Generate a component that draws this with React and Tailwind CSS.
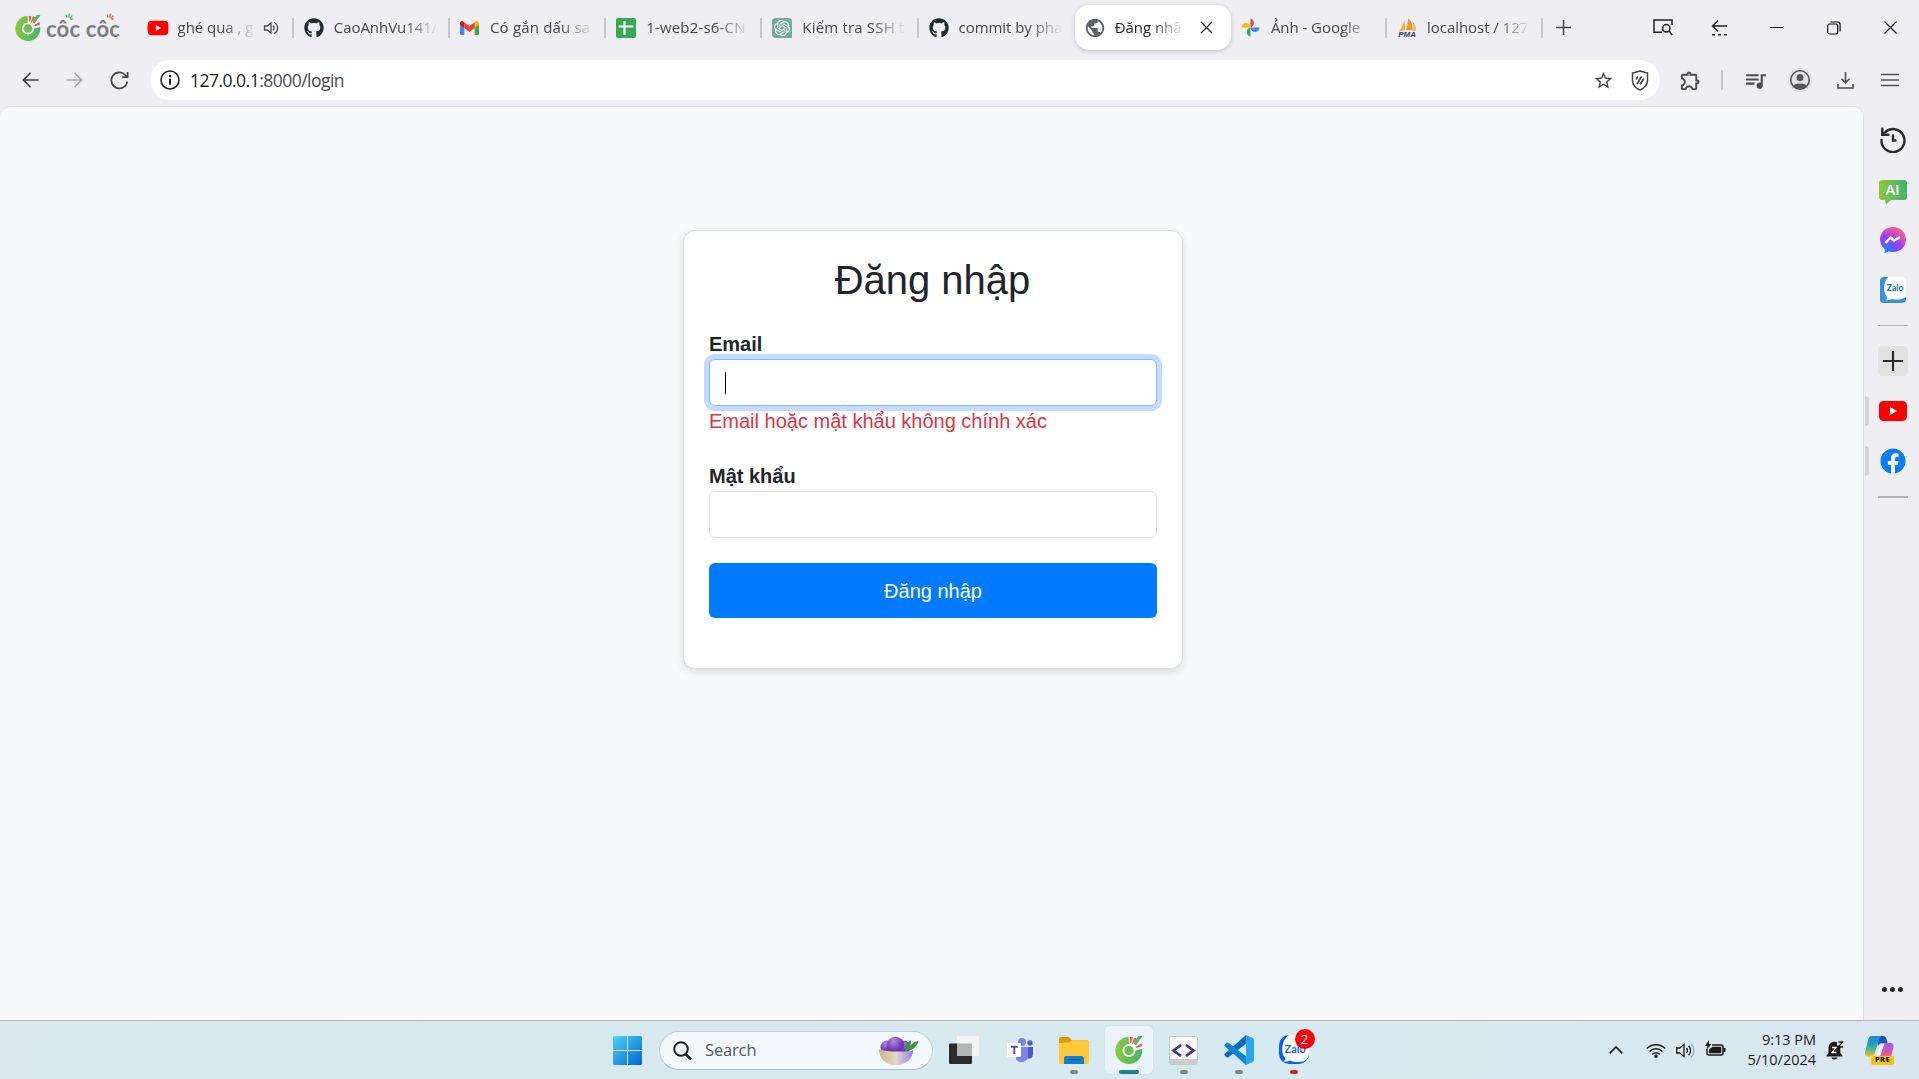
import React from "react";
import { FaYoutube, FaGithub, FaFacebook } from "react-icons/fa";
import { SiOpenai } from "react-icons/si";
import { MdPublic, MdStarBorder, MdOutlineExtension, MdQueueMusic } from "react-icons/md";

const Ray = ({ color = "#f15a38" }) => (
  <svg width="8" height="7" viewBox="0 0 8 7" stroke={color} strokeWidth="1.3" fill="none">
    <path d="M1.2 1.5l.9 3M4.6.6L3.6 4.6M7.3 2.6L4.8 5.6M7.6 5.6L5.5 6.6" />
  </svg>
);

const CocCocMark = ({ size, id }) => (
  <svg width={size} height={size} viewBox="0 0 26 26" className="shrink-0">
    <defs>
      <linearGradient id={id} x1="0" x2="1">
        <stop offset="0" stopColor="#8cc83f" />
        <stop offset="1" stopColor="#43b66a" />
      </linearGradient>
    </defs>
    <path d="M12.500 1a12.500 12.500 0 1 0 12.800 12l-.3-1-6 1.800a6 6 0 1 1-6-6.300z" fill={`url(#${id})`} />
    <circle cx="13" cy="13.500" r="5.800" fill="#f3f8f1" />
    <circle cx="13" cy="13.500" r="4.200" fill="#6bbf52" />
    <path d="M17.500 7L21.500 0H25.500L19.500 8.500z" fill="#4fb95f" />
    <path d="M13.800.8l2.500.4-1.200 5.600-1-.2zM17.800 1.300l2.300 1.200-3.600 5.200-.6-.6zM24.500 7l.6 2.500-5.200 1.700-.5-1.300z" fill="#f15a38" />
  </svg>
);

const Gmail = () => (
  <svg width="19" height="14" viewBox="0 0 19 14">
    <path d="M0 2v10.600c0 .8.600 1.400 1.400 1.400h2.900V6z" fill="#4285f4" />
    <path d="M14.700 14h2.900c.8 0 1.400-.6 1.400-1.400V2l-4.300 4z" fill="#34a853" />
    <path d="M14.700 1.200V7L19 3.800V2c0-1.700-1.900-2.600-3.300-1.600z" fill="#fbbc04" />
    <path d="M4.300 7V1.200l5.200 3.900 5.200-3.900V7l-5.200 3.900z" fill="#ea4335" />
    <path d="M0 2v1.800L4.300 7V1.200L3.300.4C1.900-.6 0 .3 0 2z" fill="#c5221f" />
  </svg>
);

const Sheets = () => (
  <svg width="20" height="20" viewBox="0 0 20 20">
    <rect width="20" height="20" rx="2" fill="#34a853" />
    <path d="M2.500 8.500h15M8.500 3v14" stroke="#fff" strokeWidth="2.200" />
  </svg>
);

const Gpt = () => (
  <div className="flex h-5 w-5 items-center justify-center rounded-[4px] rounded-br-none bg-[#74aa9c]">
    <SiOpenai size={16} color="#fff" />
  </div>
);

const Photos = () => (
  <svg width="19" height="19" viewBox="0 0 19 19">
    <path d="M9.500.5a4.700 4.700 0 0 1 0 9z" fill="#ea4335" />
    <path d="M18.500 9.500a4.500 4.500 0 0 1-9 0z" fill="#4285f4" />
    <path d="M9.500 18.500a4.600 4.600 0 0 1 0-9z" fill="#34a853" />
    <path d="M.5 9.500a4.500 4.500 0 0 1 9 0z" fill="#fbbc04" />
  </svg>
);

const Pma = () => (
  <div className="flex w-5 flex-col items-center">
    <svg width="20" height="14" viewBox="0 0 20 14">
      <path d="M7.500 1L8 12l-6 1.500C5 10 6.500 6 7.500 1z" fill="#f7a83d" />
      <path d="M11 0c4 4 5 8 4.500 12.500L9 12c1.500-4 2-8 2-12z" fill="#f79427" />
      <path d="M15.500 3c2.500 3 3.500 6 3.500 9.500l-3 .5c.6-3 .5-6.500-.5-10z" fill="#f9b04b" />
    </svg>
    <span className="font-['Liberation_Sans'] text-[8px] leading-[6px] font-bold italic text-[#3a3a78]">PMA</span>
  </div>
);

const tabs = [
  { icon: <FaYoutube size={22} color="#f00" />, title: "ghé qua , g", audio: true, sep: true },
  { icon: <FaGithub size={20} color="#24292f" />, title: "CaoAnhVu141/", sep: true },
  { icon: <Gmail />, title: "Có gắn dấu sa", sep: true, wide: true },
  { icon: <Sheets />, title: "1-web2-s6-CN", sep: true, wide: true },
  { icon: <Gpt />, title: "Kiểm tra SSH t", sep: true, wide: true },
  { icon: <FaGithub size={20} color="#24292f" />, title: "commit by pha" },
  { icon: <MdPublic size={22} color="#5f6368" />, title: "Đăng nhậ", active: true },
  { icon: <Photos />, title: "Ảnh - Google", sep: true },
  { icon: <Pma />, title: "localhost / 127", sep: true },
];

const Speaker = () => (
  <svg width="16" height="16" viewBox="0 0 16 16" fill="none" stroke="#4a4a4f" strokeWidth="1.300">
    <path d="M1.500 6v4h2.700L8 13V3L4.200 6z" />
    <path d="M10 5.500a3.500 3.500 0 0 1 0 5M11 2.500a6 6 0 0 1 0 11" />
  </svg>
);

function Tab({ icon, title, audio, active, sep, wide }) {
  const shell = active
    ? "bg-white rounded-[14px] shadow-[0_1px_4px_rgba(0,0,0,0.22)] text-[#1f1f1f]"
    : "text-[#46464b]";
  const textWidth = audio ? "w-[79px]" : active ? "w-[70px]" : "w-[104px]";
  const tracking = wide ? "tracking-[0.180px]" : "tracking-[-0.050px]";
  return (
    <div className={`flex h-[45px] w-[156.200px] shrink-0 items-center ${shell}`}>
      <div className="flex w-10 shrink-0 items-center justify-center">{icon}</div>
      <div
        className={`${textWidth} ${tracking} -mt-px shrink-0 overflow-hidden text-[15px] leading-6 whitespace-nowrap [mask-image:linear-gradient(to_right,#000_calc(100%-34px),transparent)]`}
      >
        {title}
      </div>
      {audio && <div className="ml-[6px]"><Speaker /></div>}
      {active && (
        <svg width="13" height="13" viewBox="0 0 13 13" className="ml-[15px]" stroke="#222" strokeWidth="1.300">
          <path d="M1 1l11 11M12 1L1 12" />
        </svg>
      )}
      {sep && <div className="ml-auto h-5 w-[2px] rounded bg-[#c6c6c9]" />}
    </div>
  );
}

const Slot = ({ className = "", children }) => (
  <div className={`flex shrink-0 items-center justify-center ${className}`}>{children}</div>
);

function TabStrip() {
  return (
    <div className="flex h-[55px] items-center">
      <div className="flex w-[137.600px] shrink-0 items-center pl-[15px]">
        <CocCocMark size={26} id="mark-top" />
        <div className="relative ml-[5px] pt-[3px] font-['Lato'] text-[22px] leading-[26px] font-bold tracking-[0.200px] whitespace-nowrap text-[#7d7d80]">
          côc côc
          <div className="absolute top-0 left-[19px]"><Ray color="#43b66a" /></div>
          <div className="absolute top-0 left-[60px]"><Ray /></div>
        </div>
      </div>
      {tabs.map((t) => <Tab key={t.title} {...t} />)}
      <Slot className="w-10">
        <svg width="15" height="15" viewBox="0 0 15 15" stroke="#444" strokeWidth="1.500"><path d="M7.500 0v15M0 7.500h15" /></svg>
      </Slot>
      <Slot className="ml-auto w-[57px]">
        <svg width="20" height="17" viewBox="0 0 20 17" fill="none" stroke="#222" strokeWidth="1.500">
          <path d="M9 13.200H1V1h18v5" /><circle cx="13.300" cy="9.300" r="3.700" /><path d="M16 12l3.200 4" />
        </svg>
      </Slot>
      <Slot className="w-[57px]">
        <svg width="17" height="16" viewBox="0 0 17 16" fill="none" stroke="#222" strokeWidth="1.400">
          <path d="M16 6H1.500M7 .8L1.500 6 7 11.200" /><path d="M1 14.800h15" strokeDasharray="3 3" />
        </svg>
      </Slot>
      <Slot className="w-[57px]"><div className="h-px w-[13px] bg-[#111]" /></Slot>
      <Slot className="w-[57px]">
        <svg width="14" height="14" viewBox="0 0 14 14" fill="none" stroke="#111" strokeWidth="1.200">
          <rect x=".7" y="3" width="10" height="10" rx="2" /><path d="M3.500 1H10.500a2.600 2.600 0 0 1 2.600 2.600V10.500" />
        </svg>
      </Slot>
      <Slot className="w-[57px]">
        <svg width="13" height="13" viewBox="0 0 13 13" stroke="#111" strokeWidth="1.200"><path d="M.5.5l12 12M12.500.5l-12 12" /></svg>
      </Slot>
    </div>
  );
}

function AddressRow() {
  return (
    <div className="mb-px flex h-[50px] items-center">
      <Slot className="ml-2 w-11">
        <svg width="17" height="16" viewBox="0 0 17 16" fill="none" stroke="#444" strokeWidth="1.700"><path d="M16.500 8H1.500M8.500 .8L1.300 8l7.200 7.200" /></svg>
      </Slot>
      <Slot className="w-[45px]">
        <svg width="17" height="16" viewBox="0 0 17 16" fill="none" stroke="#aaaaae" strokeWidth="1.700"><path d="M.5 8h15M8.500 .8L15.700 8l-7.200 7.200" /></svg>
      </Slot>
      <Slot className="w-[45px]">
        <svg width="19" height="19" viewBox="0 0 19 19" fill="none" stroke="#444" strokeWidth="1.700"><path d="M17.300 10.500a8 8 0 1 1-2-6.500l2 2" /><path d="M17.600 1v5.200h-5.400" /></svg>
      </Slot>
      <div className="ml-2 flex h-10 w-[1510px] items-center rounded-full bg-white pr-[11px] pl-[10px]">
        <svg width="20" height="20" viewBox="0 0 20 20" fill="none" stroke="#222" strokeWidth="1.600">
          <circle cx="10" cy="10" r="9" /><path d="M10 8.800v6" strokeWidth="2" /><path d="M10 5v2.200" strokeWidth="2" />
        </svg>
        <span className="ml-[10px] text-[17.500px] tracking-[-0.520px] text-[#4a4a4f]">
          <span className="text-[#1b1b1b]">127.0.0.1</span>:8000/login
        </span>
        <div className="ml-auto flex items-center gap-[17px]">
          <MdStarBorder size={21} color="#444" />
          <svg width="18" height="21" viewBox="0 0 18 21" fill="none" stroke="#444" strokeWidth="1.500">
            <path d="M9 1l7.500 2v7.500c0 4.500-3 7.500-7.500 9.500-4.500-2-7.500-5-7.500-9.500V3z" />
            <path d="M5.200 9.500L6.800 6.500M6 14L10.500 6.500M9 14.500L12.800 8.500" strokeWidth="1.700" />
          </svg>
        </div>
      </div>
      <Slot className="w-[61px]"><MdOutlineExtension size={23} color="#4a4a4f" /></Slot>
      <div className="h-5 w-[2px] rounded bg-[#c6c6c9]" />
      <Slot className="ml-[10px] w-11"><MdQueueMusic size={25} color="#4a4a4f" /></Slot>
      <Slot className="w-[46px]">
        <svg width="24" height="24" viewBox="0 0 24 24">
          <circle cx="12" cy="12" r="12" fill="#e2e2e4" />
          <clipPath id="avatar"><circle cx="12" cy="12" r="9" /></clipPath>
          <g clipPath="url(#avatar)" fill="#55555e"><circle cx="12" cy="9.500" r="3.500" /><ellipse cx="12" cy="20" rx="8" ry="4.500" /></g>
          <circle cx="12" cy="12" r="9.200" fill="none" stroke="#55555e" strokeWidth="1.600" />
        </svg>
      </Slot>
      <Slot className="w-11">
        <svg width="17" height="17" viewBox="0 0 17 17" fill="none" stroke="#4a4a4f" strokeWidth="1.600"><path d="M8.500 0v10.500M4.500 6.800l4 4 4-4M1 12v4h15v-4" /></svg>
      </Slot>
      <Slot className="w-[46px]">
        <svg width="18" height="14" viewBox="0 0 18 14" stroke="#55555a" strokeWidth="1.600"><path d="M0 1.500h18M0 7h18M0 12.500h18" /></svg>
      </Slot>
    </div>
  );
}

function LoginCard() {
  return (
    <div className="flex h-[439px] w-[500px] flex-col rounded-[12px] border border-[#dcdddd] bg-white px-[25px] pt-[25px] font-['Liberation_Sans',sans-serif] text-xl leading-[30px] text-[#212529] shadow-[0_3px_8px_rgba(0,0,0,0.12)]">
      <h1 className="-ml-px text-center text-[40px] leading-[48px]">Đăng nhập</h1>
      <label className="mt-[25px] h-[30px] font-bold leading-[30px]">Email</label>
      <div className="flex h-[47px] shrink-0 items-center rounded-[6px] border border-[#86b7fe] pl-[15px] shadow-[0_0_0_5px_rgba(13,110,253,0.25)]">
        <div className="h-[22px] w-px bg-black" />
      </div>
      <div className="h-[55px] pt-px leading-[28px] text-[#dc3545]">Email hoặc mật khẩu không chính xác</div>
      <label className="h-[30px] leading-[30px] font-bold">Mật khẩu</label>
      <div className="h-[47px] shrink-0 rounded-[6px] border border-[#dee2e6]" />
      <button className="mt-[25px] h-[55px] shrink-0 rounded-[6px] bg-[#007bff] text-xl text-white">Đăng nhập</button>
    </div>
  );
}

const ZaloSquare = () => (
  <svg width="26" height="26" viewBox="0 0 26 26">
    <rect width="26" height="26" rx="4" fill="#3b8fdc" />
    <path d="M8 0H23a3 3 0 0 1 3 3v17c-4 3-10 3-14 2-2 1-4 1.500-6 1 1-1 1.500-2 1-3-4-5-4-14 1-20z" fill="#fff" />
    <text x="6.800" y="14" fontSize="8.500" fontWeight="900" fill="#1878d0" fontFamily="Lato">Zalo</text>
  </svg>
);

const sideItems = [
  <svg width="26" height="26" viewBox="0 0 26 26" fill="none" stroke="#2a2a2c" strokeWidth="2.400" strokeLinecap="round">
    <path d="M1.500 13A11.500 11.500 0 1 0 5 5.300L2.500 7.500" /><path d="M2.300 1.800v6h6.200M13 8.500v5h2.500" />
  </svg>,
  <svg width="28" height="25" viewBox="0 0 28 25" className="mt-[5px]">
    <defs><linearGradient id="ai" x1="0" x2="1"><stop offset="0" stopColor="#8dc63f" /><stop offset="1" stopColor="#3fb370" /></linearGradient></defs>
    <path d="M3 0h22a3 3 0 0 1 3 3v14a3 3 0 0 1-3 3H12l-5 4.500-1-4.500H3a3 3 0 0 1-3-3V3a3 3 0 0 1 3-3z" fill="url(#ai)" />
    <text x="6.500" y="15" fontSize="14" fontWeight="700" fill="#fff" fontFamily="Lato">AI</text>
  </svg>,
  <svg width="26" height="26" viewBox="0 0 26 26">
    <defs><radialGradient id="msg" cx=".2" cy="1" r="1.100"><stop offset="0" stopColor="#0a8cff" /><stop offset=".55" stopColor="#9a3bff" /><stop offset="1" stopColor="#ff6480" /></radialGradient></defs>
    <path d="M13 0C5.500 0 0 5.400 0 12.600c0 4 1.800 7 4.700 9.300V26l4.300-1.500c1.300.4 2.600.6 4 .6 7.500 0 13-5.400 13-12.500S20.500 0 13 0z" fill="url(#msg)" />
    <path d="M5.500 16l5-5.500 3.500 3 6-3.500" fill="none" stroke="#fff" strokeWidth="2.600" strokeLinejoin="round" />
  </svg>,
  <ZaloSquare />,
];

function Sidebar() {
  return (
    <aside className="flex w-[55px] shrink-0 flex-col pt-[9px]">
      {sideItems.map((icon, i) => <Slot key={i} className="h-[50px] pl-[2px]">{icon}</Slot>)}
      <div className="mt-[10px] mr-[11px] ml-[14px] h-px shrink-0 bg-[#b4b4b8]" />
      <div className="mt-5 ml-[14px] flex h-[30px] w-[30px] shrink-0 items-center justify-center rounded bg-[#e2e2e3]">
        <svg width="20" height="20" viewBox="0 0 20 20" stroke="#2a2a2c" strokeWidth="2.200"><path d="M10 0v20M0 10h20" /></svg>
      </div>
      <div className="mt-5 flex h-[30px] shrink-0 items-center">
        <div className="ml-px h-[30px] w-1 rounded-r bg-[#d3d3d5]" />
        <svg width="28" height="20" viewBox="0 0 28 20" className="ml-[10px]"><rect width="28" height="20" rx="4.500" fill="#f00" /><path d="M11 6v8l7-4z" fill="#fff" /></svg>
      </div>
      <div className="mt-5 flex h-[30px] shrink-0 items-center">
        <div className="ml-px h-[30px] w-1 rounded-r bg-[#d3d3d5]" />
        <div className="ml-[11px] rounded-full bg-white"><FaFacebook size={26} color="#0a7cf5" /></div>
      </div>
      <div className="mt-5 mr-[11px] ml-[14px] h-[2px] shrink-0 bg-[#b4b4b8]" />
      <div className="mt-auto mb-[28px] flex justify-center gap-[3px] pl-[2px]">
        {[0, 1, 2].map((d) => <div key={d} className="h-[5px] w-[5px] rounded-full bg-[#2a2a2c]" />)}
      </div>
    </aside>
  );
}

const StartIcon = () => (
  <svg width="29" height="29" viewBox="0 0 29 29">
    <defs><linearGradient id="win" x1="0" y1="0" x2="1" y2="1"><stop offset="0" stopColor="#4fd0fb" /><stop offset="1" stopColor="#0067cf" /></linearGradient></defs>
    <path d="M1 0h13v14H0V1zM15 0h13l1 1v13H15zM0 15h14v14H1l-1-1zM15 15h14v13l-1 1H15z" fill="url(#win)" />
  </svg>
);

const Bowl = () => (
  <svg width="40" height="30" viewBox="0 0 40 30">
    <defs>
      <linearGradient id="bowl"><stop offset="0" stopColor="#cdb77c" /><stop offset=".5" stopColor="#e5d9c8" /><stop offset="1" stopColor="#9a7df0" /></linearGradient>
      <radialGradient id="ube" cx=".4" cy=".25"><stop offset="0" stopColor="#b789e8" /><stop offset="1" stopColor="#6a3bb0" /></radialGradient>
    </defs>
    <circle cx="8" cy="11" r="6.500" fill="url(#ube)" /><circle cx="25" cy="11" r="6.500" fill="url(#ube)" /><circle cx="16.500" cy="9.500" r="8.800" fill="url(#ube)" />
    <path d="M26 15c1-6 3-9 5.500-11 .8 2 .5 4-.5 6 2.500-3 5-4.500 8.500-5-1 5-6 10-13.500 10z" fill="#3f9440" />
    <path d="M0 13c4 3 29 3.500 34 1 0 8-6 15-17 15S0 22 0 13z" fill="url(#bowl)" />
  </svg>
);

const TaskView = () => (
  <svg width="30" height="28" viewBox="0 0 30 28">
    <rect y="7.500" width="23" height="20.500" rx="1" fill="#2b2b2a" /><rect x="8" width="22" height="20" rx="1" fill="#f3f3f3" /><path d="M8 7.500h15V20H8z" fill="#b5b7b7" />
  </svg>
);

const Teams = () => (
  <svg width="27" height="24" viewBox="0 0 27 24" className="ml-[3px]">
    <circle cx="15" cy="4" r="4" fill="#7b83eb" /><circle cx="23" cy="5" r="2.700" fill="#5059c9" />
    <path d="M17 9h9v7.500a4.500 4.500 0 0 1-6 4z" fill="#5059c9" /><path d="M9 9h12v8a6.500 6.500 0 0 1-12 4z" fill="#7b83eb" />
    <rect y="5" width="14" height="14" rx="1" fill="#fff" /><path d="M3.800 8.800h7M7.300 8.800v7.200" stroke="#4b53bc" strokeWidth="1.900" />
  </svg>
);

const Folder = () => (
  <svg width="30" height="27" viewBox="0 0 30 27">
    <path d="M0 1.500A1.500 1.500 0 0 1 1.500 0H10l3 3.500h15.500A1.500 1.500 0 0 1 30 5v5H0z" fill="#dd9b09" />
    <path d="M0 6l10-.5L13 3.500h15.500A1.500 1.500 0 0 1 30 5v20.500a1.500 1.500 0 0 1-1.500 1.500h-27A1.500 1.500 0 0 1 0 25.500z" fill="#fdc938" />
    <path d="M5 27v-5.500A2.500 2.500 0 0 1 7.500 19h15a2.500 2.500 0 0 1 2.500 2.500V27z" fill="#1280d0" /><path d="M9 22.700h12.500" stroke="#0a559a" strokeWidth="1.200" />
  </svg>
);

const CodeBox = () => (
  <svg width="29" height="29" viewBox="0 0 29 29">
    <rect x=".5" y=".5" width="28" height="28" rx="2" fill="#f9f9fa" stroke="#c3c8cb" /><path d="M1 23h27v5H1z" fill="#ccc" />
    <path d="M12 9L4.500 14.500l7.500 5.500M17 9l7.500 5.500-7.500 5.500" fill="none" stroke="#3c3a80" strokeWidth="2.700" />
  </svg>
);

const VsCode = () => (
  <svg width="30" height="30" viewBox="0 0 30 30">
    <path d="M22 0L1 18.500c-.8.700-.8 1.500 0 2.200l1.600 1.500c.6.500 1.200.5 1.800.1L27 5z" fill="#0a6db5" />
    <path d="M22 30L1 11.500c-.8-.7-.8-1.500 0-2.200l1.600-1.500c.6-.5 1.200-.5 1.800-.1L27 25z" fill="#0f86cf" />
    <path d="M22 0l7 3.200c.6.300 1 .8 1 1.500v20.600c0 .7-.4 1.200-1 1.500L22 30c-.8.100-1.400-.2-1.800-.7.800.4 1.800 0 1.800-1.300V2c0-1.300-1-1.700-1.800-1.300.4-.5 1-.8 1.800-.7z" fill="#2aa5ee" />
  </svg>
);

const ZaloApp = () => (
  <div className="relative">
    <svg width="30" height="30" viewBox="0 0 30 30">
      <rect width="30" height="29" rx="10" fill="#0a62f4" />
      <path d="M10 0h10a10 10 0 0 1 10 10v7c0 7-4 10-10 10-4 0-7-.5-9-1.500-2 1-4.500 1.300-6.500.7 1.500-1 2-2 1.500-3.200C1 17 3 4 10 0z" fill="#fff" />
      <text x="5.500" y="17.500" fontSize="11" fontWeight="700" fill="#1f6bea" fontFamily="Lato">Zalo</text>
    </svg>
    <div className="absolute -top-[6px] left-4 flex h-5 w-5 items-center justify-center rounded-full bg-[#fb0007] text-[13px] leading-none text-white">2</div>
  </div>
);

function AppSlot({ children, mark, active }) {
  const markStyle = { gray: "w-2 bg-[#808688]", teal: "w-5 bg-[#23808f]", red: "w-2 bg-[#c42b1c]" }[mark] || "w-2";
  const shell = active ? "bg-[#eaf3f9] shadow-[0_0_1px_0px_rgba(150,170,180,0.6)]" : "";
  return (
    <div className="flex w-[55px] shrink-0 justify-center">
      <div className={`flex h-12 w-12 flex-col items-center rounded-[5px] ${shell}`}>
        <div className="flex h-11 items-center pt-[4px]">{children}</div>
        <div className={`h-1 rounded-full ${markStyle}`} />
      </div>
    </div>
  );
}

function Taskbar() {
  return (
    <footer className="flex h-[59px] items-center border-t border-[#aeb8bd] bg-[linear-gradient(100deg,#dbe8ef_0%,#d5e9ef_30%,#d8eaf1_70%,#dae6ef_100%)]">
      <div className="ml-[613px]"><StartIcon /></div>
      <div className="ml-[17px] flex h-[39px] w-[274px] items-center rounded-full border border-[#c3d3da] border-b-[#a9bbc2] bg-[#f2f8fb] pr-[13px] pl-[13px]">
        <svg width="19" height="19" viewBox="0 0 19 19" fill="none" stroke="#222" strokeWidth="2"><circle cx="8" cy="8" r="6.800" /><path d="M12.500 13l5.500 5.500" strokeWidth="2.500" /></svg>
        <span className="mt-px ml-[13px] text-[16.500px] tracking-[-0.150px] text-[#565a5c]">Search</span>
        <div className="mt-px ml-auto"><Bowl /></div>
      </div>
      <div className="ml-[3px] flex">
        <AppSlot><TaskView /></AppSlot>
        <AppSlot><Teams /></AppSlot>
        <AppSlot mark="gray"><Folder /></AppSlot>
        <AppSlot mark="teal" active><CocCocMark size={28} id="mark-bar" /></AppSlot>
        <AppSlot mark="gray"><CodeBox /></AppSlot>
        <AppSlot mark="gray"><VsCode /></AppSlot>
        <AppSlot mark="red"><ZaloApp /></AppSlot>
      </div>
      <div className="ml-auto flex items-center">
        <svg width="14" height="8" viewBox="0 0 14 8" fill="none" stroke="#1b1b1b" strokeWidth="1.700"><path d="M.7 7.300L7 1l6.300 6.300" /></svg>
        <svg width="20" height="15" viewBox="0 0 20 15" fill="none" stroke="#1b1b1b" strokeWidth="1.400" className="ml-[23px]">
          <path d="M.8 5.500a13 13 0 0 1 18.400 0M3.500 8.500a9.200 9.200 0 0 1 13 0M6.300 11.300a5.300 5.300 0 0 1 7.400 0" /><circle cx="10" cy="13.300" r="1" fill="#1b1b1b" />
        </svg>
        <svg width="20" height="17" viewBox="0 0 20 17" fill="none" stroke="#1b1b1b" strokeWidth="1.300" className="ml-[10px]">
          <path d="M.7 6v5h3L8 14.500v-12L3.700 6zM10.500 6a4 4 0 0 1 0 5M12.700 3.800a7 7 0 0 1 0 9.400" /><path d="M15 1.500a10 10 0 0 1 0 14" stroke="#9aa8ae" />
        </svg>
        <svg width="21" height="17" viewBox="0 0 21 17" className="mb-[3px] ml-[9px]">
          <path d="M7 5h9a2 2 0 0 1 2 2v6a2 2 0 0 1-2 2H4a2 2 0 0 1-2-2V9" fill="none" stroke="#1b1b1b" strokeWidth="1.500" />
          <path d="M7.500 6.800H16.300V13.200H4V9.500zM18.500 8h2v4h-2zM4 0L0 6h2.500L1.500 10 6.500 4H4z" fill="#1b1b1b" />
        </svg>
        <div className="ml-[11px] w-[79px] text-right text-[14.500px] leading-5 tracking-[-0.020px] text-[#1b1b1b]"><div>9:13 PM</div><div>5/10/2024</div></div>
        <svg width="18" height="19" viewBox="0 0 18 19" className="ml-[10px]">
          <path d="M2.500 12V7.500C2.500 3 5 .8 8.500.8c1 0 1.800.2 2.500.5v3.200h3.300V12L16.500 14.500v1H.5v-1z" fill="#1b1b1b" /><path d="M5.500 16.500h6c-.5 2.500-5.500 2.500-6 0z" fill="#1b1b1b" />
          <path d="M6 6.500h4l-4 5h4.500" fill="none" stroke="#fff" strokeWidth="1.300" /><path d="M12.500 1h4l-4 5h4.500" fill="none" stroke="#1b1b1b" strokeWidth="1.300" />
        </svg>
        <div className="relative mr-[25px] ml-[21px] h-[29px] w-[29px]">
          <svg width="29" height="24" viewBox="0 0 29 24">
            <defs>
              <linearGradient id="cpa" x1="0" y1="0" x2="0" y2="1"><stop offset="0" stopColor="#1d85d8" /><stop offset=".5" stopColor="#28a9b0" /><stop offset="1" stopColor="#e3c52b" /></linearGradient>
              <linearGradient id="cpb" x1="0" y1="0" x2="0" y2="1"><stop offset="0" stopColor="#9a5cf0" /><stop offset=".6" stopColor="#e0549a" /><stop offset="1" stopColor="#f47a56" /></linearGradient>
            </defs>
            <path d="M12 0h6c2 0 3 1 3.500 3l1 4H17c-2 0-2.800 1-3.500 3z" fill="#1554c4" />
            <path d="M16 7h9c3 0 4 2 3.500 4.500L26 20c-.8 2.500-2 4-5 4h-9c2 0 2-2 3-5z" fill="url(#cpb)" />
            <path d="M16.500 7.500h3l-4 12h-4z" fill="#f6f4fb" />
            <path d="M7 0h9c-1.500 2-2.500 5-3.500 9l-3 9c-.8 2-2 2.500-4 2.500H3c-2.500 0-3.500-2-2.800-4.500L3 4c.8-2.500 2-4 4-4z" fill="url(#cpa)" />
          </svg>
          <div className="absolute right-0 bottom-0 flex h-[9px] w-[23px] items-center justify-center rounded-[2px] bg-[#fcc208] text-[7.500px] leading-none font-extrabold tracking-[0.300px] text-[#222]">PRE</div>
        </div>
      </div>
    </footer>
  );
}

export default function App() {
  return (
    <div className="flex h-[1079px] w-[1919px] flex-col overflow-hidden bg-[#efeef3] font-['Open_Sans',sans-serif]">
      <TabStrip />
      <AddressRow />
      <div className="flex min-h-0 flex-1">
        <main className="flex w-[1864px] shrink-0 justify-center rounded-t-[10px] border-t border-r border-[#dedfe1] bg-[#f8f9fb] pt-[123px] pl-[3px]">
          <LoginCard />
        </main>
        <Sidebar />
      </div>
      <Taskbar />
    </div>
  );
}
